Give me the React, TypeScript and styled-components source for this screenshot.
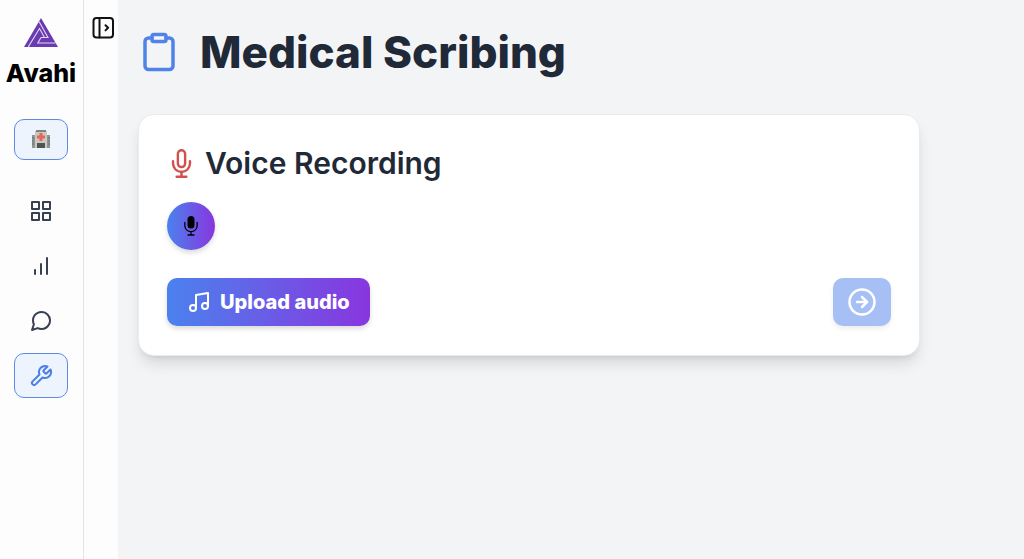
import React from "react";
import styled, { createGlobalStyle } from "styled-components";
import { FiArrowRightCircle, FiClipboard, FiGrid, FiMessageCircle, FiMic, FiMusic, FiTool } from "react-icons/fi";

const GlobalStyle = createGlobalStyle`
  *, *::before, *::after { box-sizing: border-box; }
  body {
    margin: 0;
    background: #f3f4f6;
    color: #1f2937;
    font-family: Inter, "Liberation Sans", sans-serif;
  }
  h1, h2 { margin: 0; }
  svg { display: block; flex-shrink: 0; }
`;

const Page = styled.div`
  display: flex;
  min-height: 100vh;
`;

const Sidebar = styled.aside`
  flex: 0 0 84px;
  display: flex;
  flex-direction: column;
  align-items: center;
  padding: 18px 1px 0 0;
  background: #fdfdfd;
  border-right: 1px solid #e2e4e8;
`;

const Brand = styled.a`
  display: flex;
  flex-direction: column;
  align-items: center;
  color: #000;
  font-size: 25px;
  font-weight: 800;
  line-height: 32px;
  text-decoration: none;
  gap: 10px;
`;

const Nav = styled.nav`
  display: flex;
  flex-direction: column;
  gap: 10px;
  margin-top: 28px;
`;

const NavItem = styled.a<{ $active?: boolean }>`
  display: flex;
  align-items: center;
  justify-content: center;
  width: 54px;
  height: 45px;
  border: 1px solid ${(p) => (p.$active ? "#5b8be6" : "transparent")};
  border-radius: 10px;
  background: ${(p) => (p.$active ? "#edf4fe" : "transparent")};
  color: ${(p) => (p.$active ? "#4a7fe6" : "#374151")};
`;

const HomeItem = styled(NavItem)`
  height: 41px;
  margin-top: 30px;
`;

const Rail = styled.div`
  flex: 0 0 34px;
  padding: 16px 0 0 7px;
  background: #fdfdfd;
`;

const RailButton = styled.button`
  display: block;
  padding: 0;
  border: 0;
  background: none;
  color: #111;
`;

const Main = styled.main`
  flex: 1;
  padding: 20px 104px 40px 20px;
`;

const Title = styled.h1`
  display: flex;
  align-items: center;
  gap: 20px;
  font-size: 44px;
  font-weight: 800;
  line-height: 64px;

  svg { color: #4f83e8; }
`;

const Card = styled.section`
  display: flex;
  flex-direction: column;
  margin-top: 30px;
  padding: 28px;
  border: 1px solid #e9ebee;
  border-radius: 16px;
  background: #fff;
  box-shadow: 0 10px 15px -3px rgba(0, 0, 0, 0.12), 0 4px 6px -4px rgba(0, 0, 0, 0.12);
`;

const CardTitle = styled.h2`
  display: flex;
  align-items: center;
  gap: 9px;
  font-size: 30px;
  font-weight: 600;
  line-height: 40px;

  svg { color: #d0524f; }
`;

const GradientButton = styled.button`
  display: flex;
  align-items: center;
  justify-content: center;
  height: 48px;
  border: 0;
  background: linear-gradient(to right, #4b82ee, #8836df);
  box-shadow: 0 3px 5px rgba(0, 0, 0, 0.14);
`;

const RecordButton = styled(GradientButton)`
  width: 48px;
  margin-top: 19px;
  padding: 0;
  border-radius: 50%;
  color: #000;
`;

const UploadButton = styled(GradientButton)`
  gap: 9px;
  padding: 0 20px;
  border-radius: 10px;
  color: #fff;
  font: inherit;
  font-size: 20px;
  font-weight: 800;
`;

const SubmitButton = styled.button`
  display: flex;
  align-items: center;
  justify-content: center;
  width: 58px;
  height: 48px;
  padding: 0;
  border: 0;
  border-radius: 10px;
  background: #a6bff5;
  color: #fff;
  box-shadow: 0 3px 5px rgba(0, 0, 0, 0.07);
`;

const Actions = styled.div`
  display: flex;
  align-items: center;
  justify-content: space-between;
  margin-top: 28px;
  margin-bottom: 1px;
`;

const Logo = () => (
  <svg width="34" height="29" viewBox="0 0 34 29" aria-hidden="true">
    <path d="M17 0 34 29H0Z" fill="#6a3bb0" />
    <path
      d="M15 3.5 24 19.5H17M31.7 25H13.8L17 19.5M4.3 28.9 15.5 10.5 20.5 19.5"
      fill="none"
      stroke="#e2d6f5"
      strokeWidth="1.1"
    />
  </svg>
);

const Hospital = () => (
  <svg width="18" height="19" viewBox="0 0 18 19" aria-hidden="true">
    <path d="M0 5h18v13H0z" fill="#8d9692" />
    <path d="M3 1h12v17H3z" fill="#cbc8c0" />
    <path d="M4 0h10v2H4z" fill="#7e8682" />
    <path d="M9 3v8M5 7h8" stroke="#e4665c" strokeWidth="3" />
    <path d="M5 13h8v5H5z" fill="#4d5654" />
    <path d="M1 7v9M17 7v9" stroke="#68716e" strokeDasharray="2 1" />
  </svg>
);

const Bars = () => (
  <svg width="24" height="24" viewBox="0 0 24 24" fill="none" stroke="currentColor" strokeWidth="2" strokeLinecap="round" aria-hidden="true">
    <path d="M6 20v-4M12 20V10M18 20V4" />
  </svg>
);

const PanelIcon = () => (
  <svg width="24" height="24" viewBox="0 0 24 24" fill="none" stroke="currentColor" strokeWidth="2" strokeLinecap="round" strokeLinejoin="round" aria-hidden="true">
    <rect x="2.5" y="2" width="19.5" height="19.5" rx="3" />
    <path d="M8.5 2v19.5M14.5 9.2l2.6 2.6-2.6 2.6" />
  </svg>
);

const SolidMic = () => (
  <svg width="20" height="20" viewBox="0 0 20 20" aria-hidden="true">
    <rect x="6.5" y="0" width="7" height="12.5" rx="3.5" fill="currentColor" />
    <path d="M3.8 6.5v3a6.2 6.2 0 0 0 12.4 0v-3M10 15.7V19M7 19h6" fill="none" stroke="currentColor" strokeWidth="1.3" strokeLinecap="round" />
  </svg>
);

export default function App() {
  return (
    <>
      <GlobalStyle />
      <Page>
        <Sidebar>
          <Brand href="#">
            <Logo />
            Avahi
          </Brand>
          <HomeItem href="#" $active aria-label="Hospital"><Hospital /></HomeItem>
          <Nav aria-label="Main">
            <NavItem href="#" aria-label="Dashboard"><FiGrid size={24} /></NavItem>
            <NavItem href="#" aria-label="Analytics"><Bars /></NavItem>
            <NavItem href="#" aria-label="Messages"><FiMessageCircle size={24} /></NavItem>
            <NavItem href="#" $active aria-label="Tools"><FiTool size={24} /></NavItem>
          </Nav>
        </Sidebar>
        <Rail>
          <RailButton type="button" aria-label="Expand sidebar"><PanelIcon /></RailButton>
        </Rail>
        <Main>
          <Title><FiClipboard size={42} />Medical Scribing</Title>
          <Card>
            <CardTitle><FiMic size={29} />Voice Recording</CardTitle>
            <RecordButton type="button" aria-label="Record"><SolidMic /></RecordButton>
            <Actions>
              <UploadButton type="button"><FiMusic size={24} />Upload audio</UploadButton>
              <SubmitButton type="button" aria-label="Submit"><FiArrowRightCircle size={30} /></SubmitButton>
            </Actions>
          </Card>
        </Main>
      </Page>
    </>
  );
}
